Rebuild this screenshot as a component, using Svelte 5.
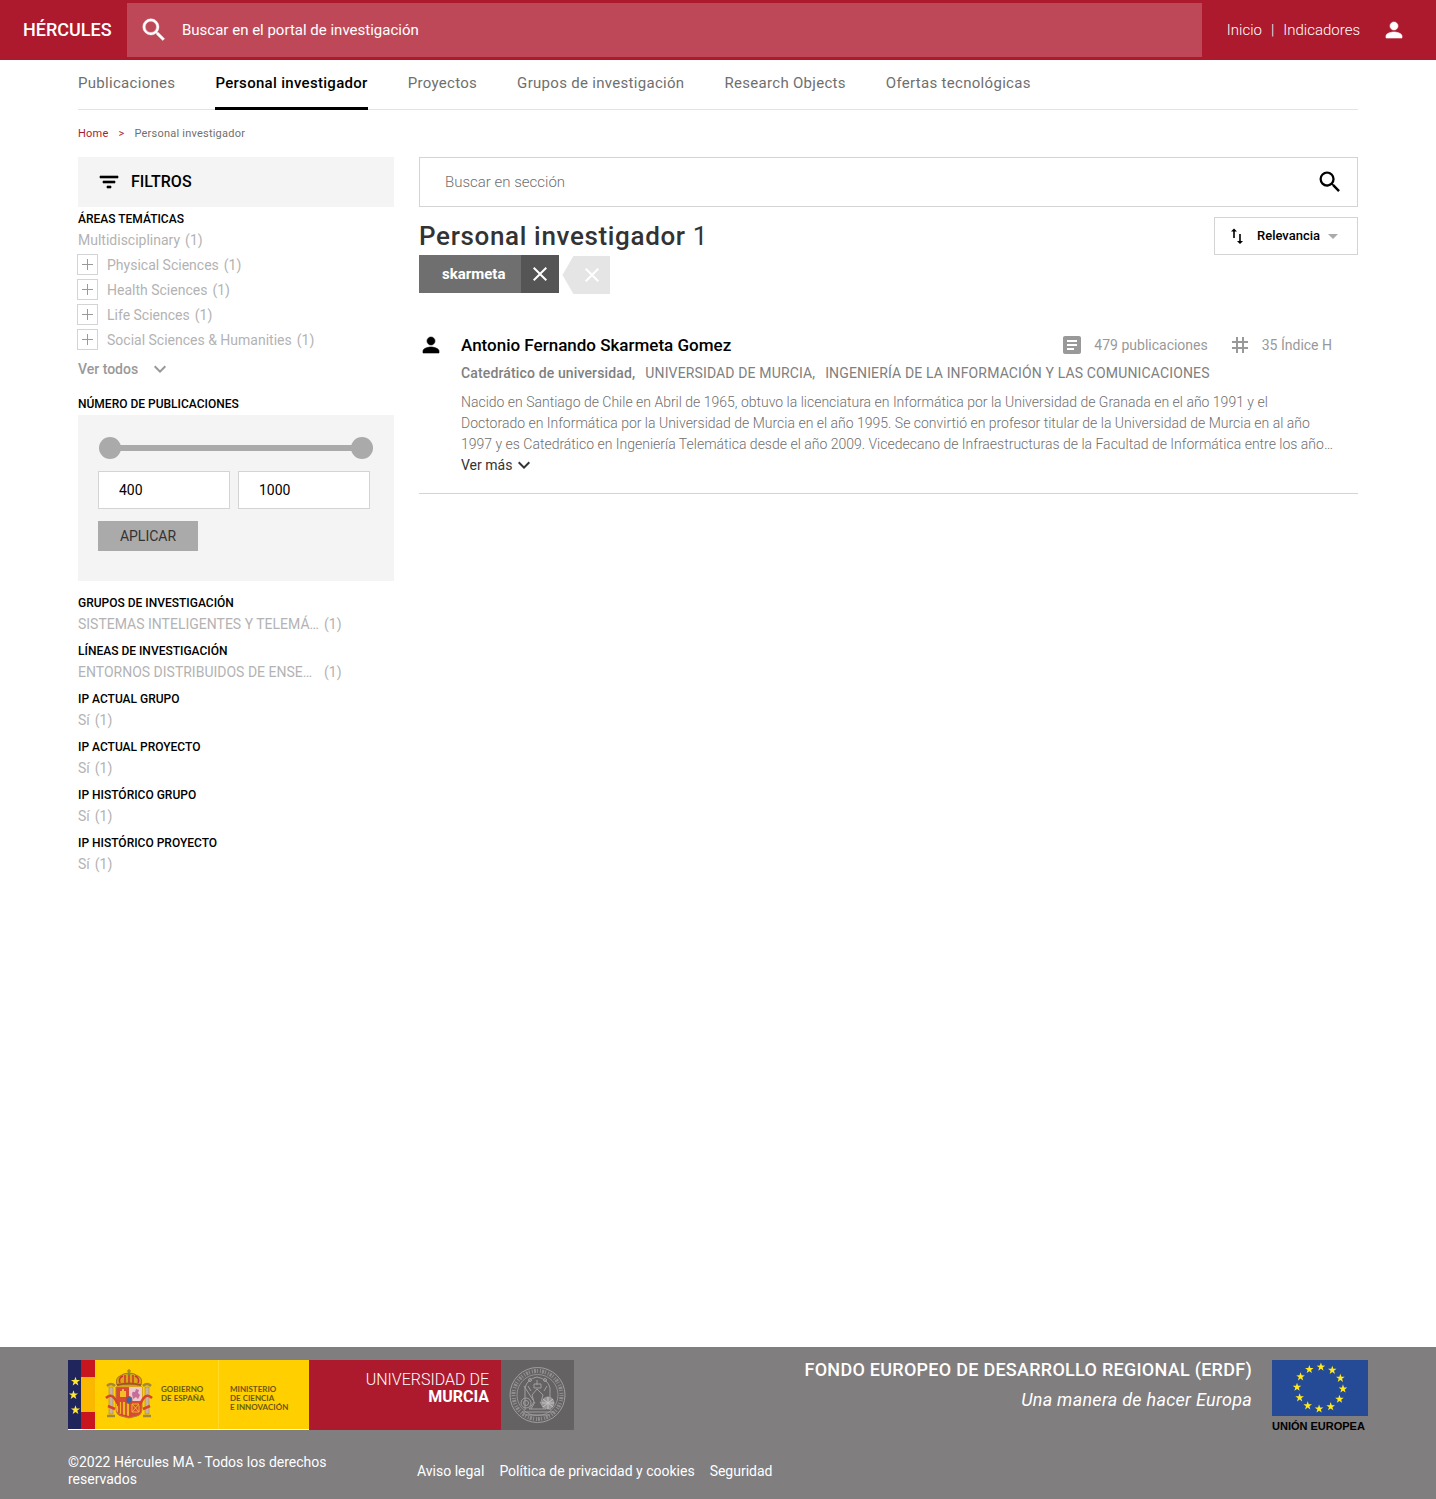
<script>
  const tabs = ['Publicaciones', 'Personal investigador', 'Proyectos', 'Grupos de investigación', 'Research Objects', 'Ofertas tecnológicas'];
  const activeTab = 'Personal investigador';

  const areas = ['Physical Sciences', 'Health Sciences', 'Life Sciences', 'Social Sciences & Humanities'];

  const facets = [
    { title: 'Grupos de investigación', value: 'SISTEMAS INTELIGENTES Y TELEMÁ…', wide: true },
    { title: 'Líneas de investigación', value: 'ENTORNOS DISTRIBUIDOS DE ENSE…', wide: true },
    { title: 'IP actual grupo', value: 'Sí' },
    { title: 'IP actual proyecto', value: 'Sí' },
    { title: 'IP histórico grupo', value: 'Sí' },
    { title: 'IP histórico proyecto', value: 'Sí' }
  ];

  let from = $state(400);
  let to = $state(1000);

  function star(cx, cy, r) {
    const points = [];
    for (let i = 0; i < 10; i++) {
      const radius = i % 2 ? r * 0.4 : r;
      const angle = (i * Math.PI) / 5 - Math.PI / 2;
      points.push(`${(cx + radius * Math.cos(angle)).toFixed(2)},${(cy + radius * Math.sin(angle)).toFixed(2)}`);
    }
    return points.join(' ');
  }

  const euStars = Array.from({ length: 12 }, (_, i) => {
    const a = (i * Math.PI) / 6 + 0.04;
    return star(48 + 23 * Math.sin(a), 28 - 21 * Math.cos(a), 4.5);
  });

  const paths = {
    search: 'M15.5 14h-.79l-.28-.27A6.47 6.47 0 0 0 16 9.5 6.5 6.5 0 1 0 9.5 16c1.61 0 3.09-.59 4.23-1.57l.27.28v.79l5 4.99L20.49 19l-4.99-5zm-6 0C7.01 14 5 11.99 5 9.5S7.01 5 9.5 5 14 7.01 14 9.5 11.99 14 9.5 14z',
    person: 'M12 12c2.21 0 4-1.79 4-4s-1.79-4-4-4-4 1.79-4 4 1.79 4 4 4zm0 2c-2.67 0-8 1.34-8 4v2h16v-2c0-2.66-5.33-4-8-4z',
    filter: 'M10 18h4v-2h-4v2zM3 6v2h18V6H3zm3 7h12v-2H6v2z',
    down: 'M7.41 8.59 12 13.17l4.59-4.58L18 10l-6 6-6-6z',
    close: 'M19 6.41 17.59 5 12 10.59 6.41 5 5 6.41 10.59 12 5 17.59 6.41 19 12 13.41 17.59 19 19 17.59 13.41 12z',
    article: 'M19 3H5c-1.1 0-2 .9-2 2v14c0 1.1.9 2 2 2h14c1.1 0 2-.9 2-2V5c0-1.1-.9-2-2-2zm-5 14H7v-2h7v2zm3-4H7v-2h10v2zm0-4H7V7h10v2z',
    tag: 'M20 10V8h-4V4h-2v4h-4V4H8v4H4v2h4v4H4v2h4v4h2v-4h4v4h2v-4h4v-2h-4v-4h4zm-6 4h-4v-4h4v4z',
    swap: 'M9 4.500 6 7.500h2.200V14h1.600V7.500H12zM14.200 10v7H12l3 3 3-3h-2.200v-7z',
    caret: 'M7 10l5 5 5-5z'
  };
</script>

{#snippet icon(name, size = 24)}
  <svg class="icon icon-{name}" width={size} height={size} viewBox="0 0 24 24" aria-hidden="true"><path d={paths[name]} /></svg>
{/snippet}

<div class="page">
  <header class="topbar">
    <a class="brand" href="#inicio">HÉRCULES</a>
    <label class="global-search">
      {@render icon('search', 30)}
      <input type="text" placeholder="Buscar en el portal de investigación" aria-label="Buscar en el portal" />
    </label>
    <nav class="toplinks" aria-label="Principal">
      <a href="#inicio">Inicio</a><span>|</span><a href="#indicadores">Indicadores</a>
    </nav>
    <button class="user" aria-label="Usuario">{@render icon('person')}</button>
  </header>

  <div class="container">
    <nav class="tabs" aria-label="Secciones">
      {#each tabs as tab}
        <a href="#seccion" class:active={tab === activeTab}>{tab}</a>
      {/each}
    </nav>
    <nav class="crumbs" aria-label="Ruta">
      <a href="#home">Home</a><span class="sep">&gt;</span><span>Personal investigador</span>
    </nav>

    <div class="columns">
      <aside>
        <div class="filters-title">{@render icon('filter')}<span>FILTROS</span></div>

        <section class="facet first">
          <h2>Áreas temáticas</h2>
          <ul>
            <li><a href="#f">Multidisciplinary</a><span>(1)</span></li>
            {#each areas as area}
              <li>
                <button class="plus" aria-label={`Desplegar ${area}`}>
                  <svg width="11" height="11" viewBox="0 0 11 11" aria-hidden="true"><path d="M5 0h1v5h5v1H6v5H5V6H0V5h5z" /></svg>
                </button>
                <a href="#f">{area}</a><span>(1)</span>
              </li>
            {/each}
          </ul>
          <button class="all">Ver todos {@render icon('down')}</button>
        </section>

        <section class="facet range">
          <h2>Número de publicaciones</h2>
          <div class="range-box">
            <div class="slider">
              <input type="range" min="400" max="1000" bind:value={from} aria-label="Mínimo" />
              <input type="range" min="400" max="1000" bind:value={to} aria-label="Máximo" />
            </div>
            <div class="bounds">
              <input type="text" bind:value={from} aria-label="Desde" />
              <input type="text" bind:value={to} aria-label="Hasta" />
            </div>
            <button class="apply">APLICAR</button>
          </div>
        </section>

        {#each facets as facet}
          <section class="facet">
            <h2>{facet.title}</h2>
            <ul>
              <li><a href="#f" class:wide={facet.wide}>{facet.value}</a><span>(1)</span></li>
            </ul>
          </section>
        {/each}
      </aside>

      <main>
        <label class="section-search">
          <input type="text" placeholder="Buscar en sección" aria-label="Buscar en sección" />
          {@render icon('search', 28)}
        </label>

        <div class="heading">
          <h1>Personal investigador <span>1</span></h1>
          <label class="sort">
            {@render icon('swap')}
            <select aria-label="Ordenar por"><option>Relevancia</option></select>
            {@render icon('caret')}
          </label>
        </div>

        <div class="chips">
          <div class="chip"><span>skarmeta</span><button aria-label="Quitar skarmeta">{@render icon('close')}</button></div>
          <button class="clear" aria-label="Borrar filtros">{@render icon('close')}</button>
        </div>

        <article class="result">
          <div class="avatar">{@render icon('person')}</div>
          <div class="body">
            <div class="name-row">
              <h2><a href="#persona">Antonio Fernando Skarmeta Gomez</a></h2>
              <div class="stats">
                <span>{@render icon('article')}479 publicaciones</span>
                <span>{@render icon('tag')}35 Índice H</span>
              </div>
            </div>
            <div class="meta">
              <strong>Catedrático de universidad,</strong>
              <span>UNIVERSIDAD DE MURCIA,</span>
              <span>INGENIERÍA DE LA INFORMACIÓN Y LAS COMUNICACIONES</span>
            </div>
            <p>Nacido en Santiago de Chile en Abril de 1965, obtuvo la licenciatura en Informática por la Universidad de Granada en el año 1991 y el Doctorado en Informática por la Universidad de Murcia en el año 1995. Se convirtió en profesor titular de la Universidad de Murcia en al año 1997 y es Catedrático en Ingeniería Telemática desde el año 2009. Vicedecano de Infraestructuras de la Facultad de Informática entre los año…</p>
            <button class="more">Ver más {@render icon('down')}</button>
          </div>
        </article>
      </main>
    </div>
  </div>

  <footer>
    <div class="footer-inner">
      <div class="footer-top">
        <div class="logos">
          <svg width="241" height="70" viewBox="0 0 241 70" role="img" aria-label="Gobierno de España, Ministerio de Ciencia e Innovación">
            <rect width="241" height="70" fill="#fff" />
            <rect width="241" height="69" fill="#ffcf00" />
            <rect width="13" height="69" fill="#20265c" />
            <rect x="13" width="14" height="69" fill="#c8151e" />
            <rect x="13" y="17" width="14" height="35" fill="#fab800" />
            <g fill="#ffe833">
              <polygon points={star(7.5, 21.5, 4.8)} />
              <polygon points={star(5.5, 35, 4.8)} />
              <polygon points={star(7.5, 50, 4.8)} />
            </g>
            <path d="M150.500 0V69" stroke="#ffd82a" />
            <g>
              <path d="M49 25q-2-7 3-9 4-3 9-3t9 3q5 2 3 9z" fill="#d9a514" stroke="#a5742a" />
              <path d="M52 23q-2-5 3-7M57 23v-8M61 23V13M65 23v-8M70 23q2-5-3-7" fill="none" stroke="#cf3331" stroke-width="1.500" />
              <path d="M61 9v5M59 11h4" stroke="#8d762d" />
              <circle cx="61" cy="14" r="1.500" fill="#718b4d" />
              <path d="M49 25q12-3 24 0" fill="none" stroke="#a05528" stroke-width="2" />
              <path d="M48 27h26v21q0 7-5 8l-8 2-8-2q-5-1-5-8z" fill="#d84a32" stroke="#b07d35" />
              <path d="M61 27h13v14H61z" fill="#efc8ca" />
              <path d="M64 34q0-3 3-2l1-3 3 1-1 3 2 2-2 4-2-2-3 2z" fill="#c56d9b" />
              <path d="M52 37v-6h2v-2h2v2h2v6z" fill="#f3be27" />
              <path d="M48 42h13v14l-8-2q-5-1-5-7z" fill="#f0b725" />
              <path d="M51 42v11M54 42v13M58 42v14" stroke="#cf3931" stroke-width="1.500" />
              <path d="M64 44h7v8h-7zM64 44l7 8M71 44l-7 8" fill="none" stroke="#edb331" />
              <ellipse cx="61" cy="40" rx="3" ry="3.500" fill="#3568a5" stroke="#bb493c" />
              <path d="M41 27h4v27h-4zM77 27h4v27h-4z" fill="#c8b49b" stroke="#a17d4c" stroke-width=".5" />
              <path d="M39 26q4-4 8 0M75 26q4-4 8 0M39 56h8M75 56h8" fill="none" stroke="#a1883d" stroke-width="2.500" />
              <path d="M38 38q5-5 9 1t2 6M84 38q-5-5-9 1t-2 6M40 46l7 3M82 46l-7 3" fill="none" stroke="#d8432a" stroke-width="2.500" />
            </g>
            <g class="gov">
              <text x="93" y="32">GOBIERNO</text>
              <text x="93" y="41">DE ESPAÑA</text>
              <text x="162" y="32">MINISTERIO</text>
              <text x="162" y="41">DE CIENCIA</text>
              <text x="162" y="50">E INNOVACIÓN</text>
            </g>
          </svg>
          <svg width="265" height="70" viewBox="0 0 265 70" role="img" aria-label="Universidad de Murcia">
            <rect width="192" height="70" fill="#ae1a2d" />
            <rect x="192" width="73" height="70" fill="#646263" />
            <text class="um" x="180" y="25">UNIVERSIDAD DE</text>
            <text class="um bold" x="180" y="42">MURCIA</text>
            <g fill="none" stroke="#a09e9f">
              <circle cx="228.500" cy="35" r="27.500" />
              <circle cx="228.500" cy="35" r="24" stroke-width="4" stroke-dasharray="1 1.200 2 1 1 2" opacity=".75" />
              <circle cx="228.500" cy="35" r="20.500" stroke-width=".8" />
              <path d="M216 50V28q2-9 12-11 11 2 13 11v22M213 52h31M216 55h25M219 26l3 5M238 26l-3 5M228 20v5" />
              <path d="M215 26l9 14M223 35l5-6 6 6-2 7 5 7h-17l5-7zM225 28h7v-4h-7zM226 42l-4 7M231 42l4 7" />
              <circle cx="217" cy="43" r="5" /><circle cx="217" cy="43" r="2.500" />
              <circle cx="239" cy="43" r="6" fill="#959394" /><path d="M234 39l10 8M244 39l-10 8M239 37v12M233 43h12" stroke="#c4c2c3" />
              <circle cx="221" cy="20" r="1.500" /><circle cx="236" cy="20" r="1.500" />
            </g>
          </svg>
        </div>
        <div class="erdf">
          <div class="erdf-text">
            <strong>FONDO EUROPEO DE DESARROLLO REGIONAL (ERDF)</strong>
            <em>Una manera de hacer Europa</em>
          </div>
          <div class="eu">
            <svg width="96" height="56" viewBox="0 0 96 56" aria-hidden="true">
              <rect width="96" height="56" fill="#264b96" />
              {#each euStars as points}<polygon {points} fill="#ffe91f" />{/each}
            </svg>
            <span>UNIÓN EUROPEA</span>
          </div>
        </div>
      </div>
      <div class="footer-bottom">
        <p>©2022 Hércules MA - Todos los derechos reservados</p>
        <nav aria-label="Legal">
          <a href="#aviso">Aviso legal</a>
          <a href="#privacidad">Política de privacidad y cookies</a>
          <a href="#seguridad">Seguridad</a>
        </nav>
      </div>
    </div>
  </footer>
</div>

<style>
  :global(body) { margin: 0; background: #fff; }
  .page, .page * { box-sizing: border-box; }
  .page {
    display: flex; flex-direction: column; min-height: 100vh;
    font-family: Roboto, 'Liberation Sans', sans-serif; font-size: 14px; line-height: 20px; color: #000;
  }
  a { color: inherit; text-decoration: none; }
  button { border: 0; padding: 0; background: none; color: inherit; font: inherit; cursor: pointer; }
  input, select { font: inherit; color: inherit; border: 0; background: none; outline: 0; min-width: 0; }
  h1, h2, p, ul { margin: 0; padding: 0; list-style: none; }
  svg { display: block; flex: none; }
  .icon { fill: currentColor; }
  .icon-filter, .icon-person { stroke: currentColor; stroke-width: 0.6; }
  .icon-caret { color: #aaa; }

  .topbar { display: flex; align-items: center; height: 60px; background: #ae1a2d; color: #fff; font-size: 15px; }
  .brand { width: 127px; padding-left: 23px; font-size: 18px; font-weight: 500; }
  .global-search { flex: 1; display: flex; align-items: center; gap: 13px; height: 54px; padding-left: 12px; background: #bf4858; }
  .global-search .icon { stroke: currentColor; stroke-width: 0.3; }
  .global-search input { flex: 1; padding: 0; }
  .global-search input::placeholder { color: #fff; opacity: 1; }
  .toplinks { display: flex; gap: 9px; padding-left: 25px; font-weight: 300; }
  .user { margin: 0 30px 0 22px; }

  .container { width: 100%; max-width: 1280px; margin: 0 auto; }
  .tabs { display: flex; gap: 40px; height: 50px; border-bottom: 1px solid #e3e3e3; font-size: 15px; letter-spacing: 0.02em; color: #6f6f6f; }
  .tabs a { height: 50px; padding-top: 13px; }
  .tabs .active { border-bottom: 3px solid #000; font-weight: 500; color: #000; }
  .crumbs { display: flex; gap: 10px; padding: 14px 0 13px; font-size: 11px; letter-spacing: 0.02em; color: #6f6f6f; }
  .crumbs a, .crumbs .sep { color: #ae1a2d; }

  .columns { display: grid; grid-template-columns: 316px minmax(0, 1fr); gap: 25px; }
  .filters-title { display: flex; align-items: center; gap: 10px; height: 50px; padding-left: 19px; background: #f4f4f4; font-size: 16px; font-weight: 500; }
  .facet { margin-bottom: 6px; }
  .facet.first { padding-top: 2px; margin-bottom: 14px; }
  .facet h2 { font-size: 12px; line-height: 20px; font-weight: 500; text-transform: uppercase; }
  .facet ul { display: grid; gap: 3px; color: #b3b3b3; }
  .facet li { display: flex; align-items: center; gap: 5px; height: 22px; }
  .wide { width: 241px; white-space: nowrap; }
  .plus { display: grid; place-items: center; width: 21px; height: 21px; margin: 0 4px 2px -1px; border: 1px solid #d4d4d4; }
  .plus svg { fill: #999; }
  .all { display: flex; align-items: center; gap: 10px; height: 22px; margin-top: 7px; font-weight: 500; color: #999; }
  .facet.range { margin-bottom: 12px; }
  .range-box { margin-top: 1px; padding: 22px 20px 30px; background: #f4f4f4; }
  .slider { display: grid; margin: 0 1px; background: linear-gradient(#aaa, #aaa) center / calc(100% - 20px) 6px no-repeat; }
  .slider input {
    grid-area: 1 / 1; width: 100%; height: 22px; margin: 0; appearance: none; pointer-events: none;
  }
  .slider input::-webkit-slider-thumb { appearance: none; width: 22px; height: 22px; border-radius: 50%; background: #aaa; pointer-events: auto; }
  .bounds { display: flex; gap: 8px; margin: 12px 0; padding-right: 4px; }
  .bounds input { flex: 1; height: 38px; padding: 0 20px; border: 1px solid #d4d4d4; background: #fff; }
  .apply { display: block; width: 100px; height: 30px; background: #aaa; color: #333; }

  .section-search { display: flex; align-items: center; height: 50px; padding: 0 13px 0 25px; border: 1px solid #d4d4d4; font-size: 15px; font-weight: 300; }
  .section-search input { flex: 1; padding: 0; }
  .section-search input::placeholder { color: #6f6f6f; opacity: 1; }
  .heading { display: flex; justify-content: space-between; height: 38px; margin-top: 10px; }
  h1 { font-size: 26px; line-height: 38px; font-weight: 500; color: #333; letter-spacing: 0.025em; }
  h1 span { font-weight: 400; }
  .sort { display: flex; align-items: center; height: 38px; padding: 0 12px 0 10px; border: 1px solid #d4d4d4; font-size: 13px; font-weight: 500; }
  .sort select { appearance: none; padding: 0; margin-left: 8px; }
  .chips { display: flex; gap: 3px; }
  .chip { display: flex; height: 38px; background: #6f6f6f; color: #fff; font-size: 15px; font-weight: 700; line-height: 38px; }
  .chip span { padding: 0 16px 0 23px; }
  .chip button { display: grid; place-items: center; width: 38px; background: #555; }
  .clear { display: grid; place-items: center; width: 48px; height: 38px; margin-top: 1px; padding-left: 11px; background: #e5e5e5; color: #fff; clip-path: polygon(11px 0, 100% 0, 100% 100%, 11px 100%, 0 50%); }

  .result { display: flex; gap: 18px; margin-top: 38px; padding-bottom: 18px; border-bottom: 1px solid #d4d4d4; }
  .avatar { display: flex; align-items: center; width: 24px; height: 26px; }
  .body { flex: 1; padding-right: 24px; }
  .name-row { display: flex; justify-content: space-between; height: 26px; padding-right: 2px; line-height: 26px; }
  .name-row h2 { font-size: 17px; line-height: 26px; font-weight: 500; }
  .stats { display: flex; gap: 20px; color: #999; }
  .stats span { display: flex; align-items: center; gap: 10px; }
  .meta { display: flex; gap: 10px; margin-top: 5px; letter-spacing: 0.01em; color: #808080; }
  .meta strong { font-weight: 500; }
  .body p { margin-top: 9px; line-height: 21px; font-weight: 300; color: #6f6f6f; }
  .more { display: flex; align-items: center; height: 20px; color: #333; }

  footer { margin-top: auto; background: #807e7f; color: #fff; }
  .footer-inner { width: 100%; max-width: 1300px; margin: 0 auto; padding: 8px 0 11px; }
  .footer-top, .logos, .erdf { display: flex; }
  .footer-top { justify-content: space-between; }
  .logos, .eu { padding-top: 5px; }
  .gov { font-family: Lato, sans-serif; font-size: 8px; font-weight: 700; fill: #6b5712; }
  .um { font-family: Roboto, sans-serif; font-size: 16px; font-weight: 300; fill: #fff; text-anchor: end; }
  .um.bold { font-weight: 700; }
  .erdf { gap: 20px; }
  .erdf-text { display: grid; grid-auto-rows: 30px; text-align: right; font-size: 18px; line-height: 30px; letter-spacing: 0.015em; }
  .erdf-text strong { font-weight: 500; }
  .eu span { display: block; font-family: 'Liberation Sans', sans-serif; font-size: 11px; font-weight: 700; color: #000; }
  .footer-bottom { display: flex; align-items: center; gap: 49px; margin-top: 18px; }
  .footer-bottom p { width: 300px; line-height: 17px; }
  .footer-bottom nav { display: flex; gap: 15px; }
</style>
